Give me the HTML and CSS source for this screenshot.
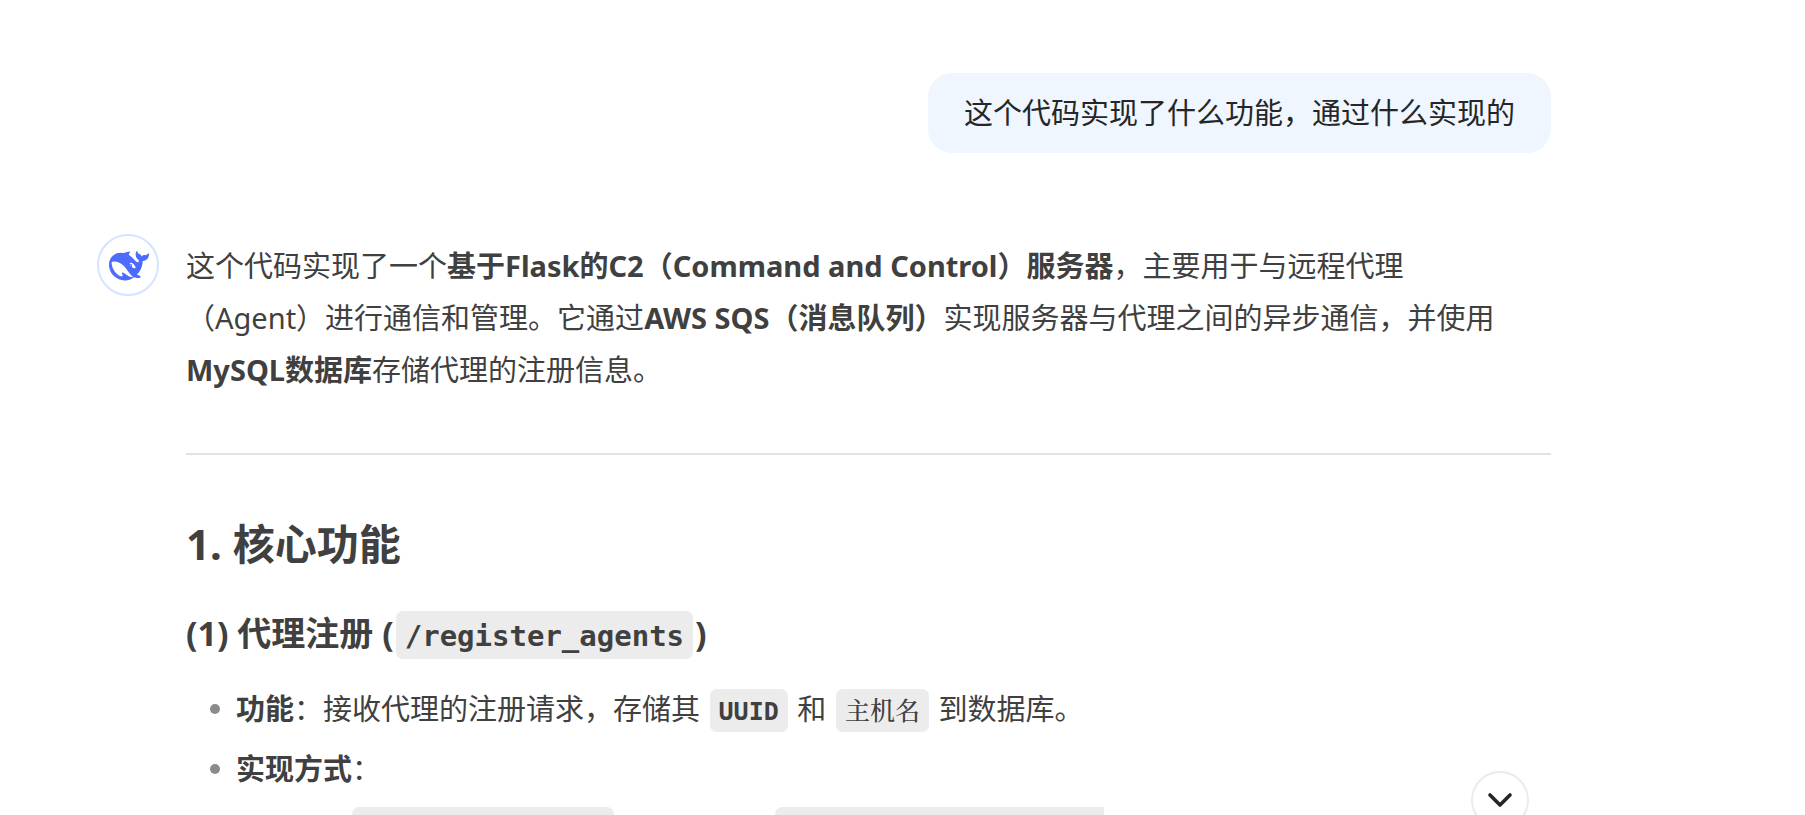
FILE: index.html
```html
<!DOCTYPE html>
<html lang="zh-CN">
<head>
<meta charset="utf-8">
<title>对话</title>
<link rel="stylesheet" href="styles.css">
</head>
<body>
<main class="chat">
  <div class="question">这个代码实现了什么功能，通过什么实现的</div>
  <article class="answer">
    <div class="avatar">
      <svg class="whale" viewBox="0 0 24 24" aria-hidden="true"><path d="M23.748 4.482c-.254-.124-.364.113-.512.234-.051.039-.094.09-.137.136-.372.397-.806.657-1.373.626-.829-.046-1.537.214-2.163.848-.133-.782-.575-1.248-1.247-1.548-.352-.156-.708-.311-.955-.65-.172-.241-.219-.51-.305-.774-.055-.16-.11-.323-.293-.35-.2-.031-.278.136-.356.276-.313.572-.434 1.202-.422 1.84.027 1.436.633 2.58 1.838 3.393.137.093.172.187.129.323-.082.28-.18.552-.266.833-.055.179-.137.217-.329.14a5.526 5.526 0 01-1.736-1.18c-.857-.828-1.631-1.742-2.597-2.458a11.365 11.365 0 00-.689-.471c-.985-.957.13-1.743.388-1.836.27-.098.093-.432-.779-.428-.872.004-1.67.295-2.687.684a3.055 3.055 0 01-.465.137 9.597 9.597 0 00-2.883-.102c-1.885.21-3.39 1.102-4.497 2.623C.082 8.606-.231 10.684.152 12.85c.403 2.284 1.569 4.175 3.36 5.653 1.858 1.533 3.997 2.284 6.438 2.14 1.482-.085 3.133-.284 4.994-1.86.47.234.962.327 1.78.397.63.059 1.236-.03 1.705-.128.735-.156.684-.837.419-.961-2.155-1.004-1.682-.595-2.113-.926 1.096-1.296 2.746-2.642 3.392-7.003.05-.347.007-.565 0-.845-.004-.17.035-.237.23-.256a4.173 4.173 0 001.545-.475c1.396-.763 1.96-2.015 2.093-3.517.02-.23-.004-.467-.247-.588zM11.581 18c-2.089-1.642-3.102-2.183-3.52-2.16-.392.024-.321.471-.235.763.09.288.207.486.371.739.114.167.192.416-.113.603-.673.416-1.842-.14-1.897-.167-1.361-.802-2.5-1.86-3.301-3.307-.774-1.393-1.224-2.887-1.298-4.482-.02-.386.093-.522.477-.592a4.696 4.696 0 011.529-.039c2.132.312 3.946 1.265 5.468 2.774.868.86 1.525 1.887 2.202 2.891.72 1.066 1.494 2.082 2.48 2.914.348.292.625.514.891.677-.802.09-2.14.11-3.054-.614zm1-6.44a.306.306 0 01.415-.287.302.302 0 01.2.288.306.306 0 01-.31.307.303.303 0 01-.304-.308zm3.11 1.596c-.2.081-.399.151-.59.16a1.245 1.245 0 01-.798-.254c-.274-.23-.47-.358-.552-.758a1.73 1.73 0 01.016-.588c.07-.327-.008-.537-.239-.727-.187-.156-.426-.199-.688-.199a.559.559 0 01-.254-.078c-.11-.046-.2-.16-.114-.328.028-.054.16-.186.192-.21.356-.202.767-.136 1.146.016.352.144.618.408 1.001.782.391.451.462.576.685.914.176.265.336.537.445.848.067.195-.019.354-.25.452z"/></svg>
    </div>
    <div class="markdown">
      <p>这个代码实现了一个<strong>基于Flask的C2（Command and Control）服务器</strong>，主要用于与远程代理<br>（Agent）进行通信和管理。它通过<strong>AWS SQS（消息队列）</strong>实现服务器与代理之间的异步通信，并使用<br><strong>MySQL数据库</strong>存储代理的注册信息。</p>
      <hr>
      <h2>1. 核心功能</h2>
      <h3>(1) 代理注册 (<code>/register_agents</code>)</h3>
      <ul class="points">
        <li><strong>功能</strong>：接收代理的注册请求，存储其 <code><b>UUID</b></code> 和 <code>主机名</code> 到数据库。</li>
        <li><strong>实现方式</strong>：</li>
      </ul>
      <div class="chips">
        <span class="chip"></span>
        <span class="chip chip-wrapped"></span>
      </div>
    </div>
  </article>
</main>
<button class="to-bottom" type="button" aria-label="滚动到底部">
  <svg class="chevron" viewBox="0 0 26 16" aria-hidden="true"><path d="M3 3l10 10L23 3"/></svg>
</button>
</body>
</html>
```
FILE: styles.css
```css
* {
  box-sizing: border-box;
}

body {
  margin: 0;
  height: 100vh;
  overflow: hidden;
  background: #fff;
  color: #404040;
  font-family: "Noto Sans", "Noto Sans CJK SC", sans-serif;
  font-size: 29px;
  line-height: 52px;
  text-spacing-trim: space-all;
}

.chat {
  display: flex;
  flex-direction: column;
  padding: 73px 254px 0 97px;
}

.question {
  align-self: flex-end;
  padding: 14px 36px;
  border-radius: 24px;
  background: #eff6ff;
  color: #262626;
}

.answer {
  display: flex;
  align-items: flex-start;
  gap: 27px;
  margin-top: 81px;
}

.avatar {
  display: flex;
  flex: none;
  align-items: center;
  justify-content: center;
  width: 62px;
  height: 62px;
  padding: 1px 0 0 2px;
  border: 2px solid #d5e4ff;
  border-radius: 50%;
}

.whale {
  width: 40px;
  height: 40px;
  fill: #4d6bfe;
}

.markdown {
  flex: 1;
  min-width: 0;
  padding-top: 6px;
}

p {
  margin: 0;
}

hr {
  height: 2px;
  margin: 57px 0 61px;
  border: 0;
  background: #e2e2e2;
}

h2 {
  margin: 0;
  font-size: 42px;
  line-height: 56px;
}

h3 {
  margin: 35px 0 0;
  font-size: 34px;
  line-height: 52px;
}

code {
  margin: 0 2px;
  padding: 8px 9px 6px;
  border-radius: 7px;
  background: #ececec;
  font-family: "DejaVu Sans Mono", "Noto Serif CJK SC", "Noto Sans CJK SC", monospace;
  font-size: 25px;
  font-weight: 500;
  line-height: 1;
}

h3 code {
  font-size: 29px;
  font-weight: 700;
}

.points {
  display: flex;
  flex-direction: column;
  gap: 8px;
  margin: 24px 0 0;
  padding: 0;
  list-style: none;
}

.points li {
  display: flow-root;
  position: relative;
  padding-left: 50px;
}

.points li::before {
  content: "";
  position: absolute;
  top: 21px;
  left: 24px;
  width: 10px;
  height: 10px;
  border-radius: 50%;
  background: #8b8b8b;
}

.chips {
  display: flex;
  gap: 161px;
  margin-top: 12px;
  padding-left: 166px;
}

.chip {
  width: 262px;
  height: 43px;
  border-radius: 7px;
  background: #ececec;
}

.chip-wrapped {
  width: 329px;
  border-radius: 7px 0 0 7px;
}

.to-bottom {
  position: fixed;
  right: 276px;
  bottom: -14px;
  display: flex;
  align-items: center;
  justify-content: center;
  width: 58px;
  height: 58px;
  padding: 0;
  border: 2px solid #ebebeb;
  border-radius: 50%;
  background: #fff;
}

.chevron {
  width: 26px;
  height: 16px;
  fill: none;
  stroke: #262626;
  stroke-width: 3.6;
  stroke-linecap: round;
  stroke-linejoin: round;
}
```
